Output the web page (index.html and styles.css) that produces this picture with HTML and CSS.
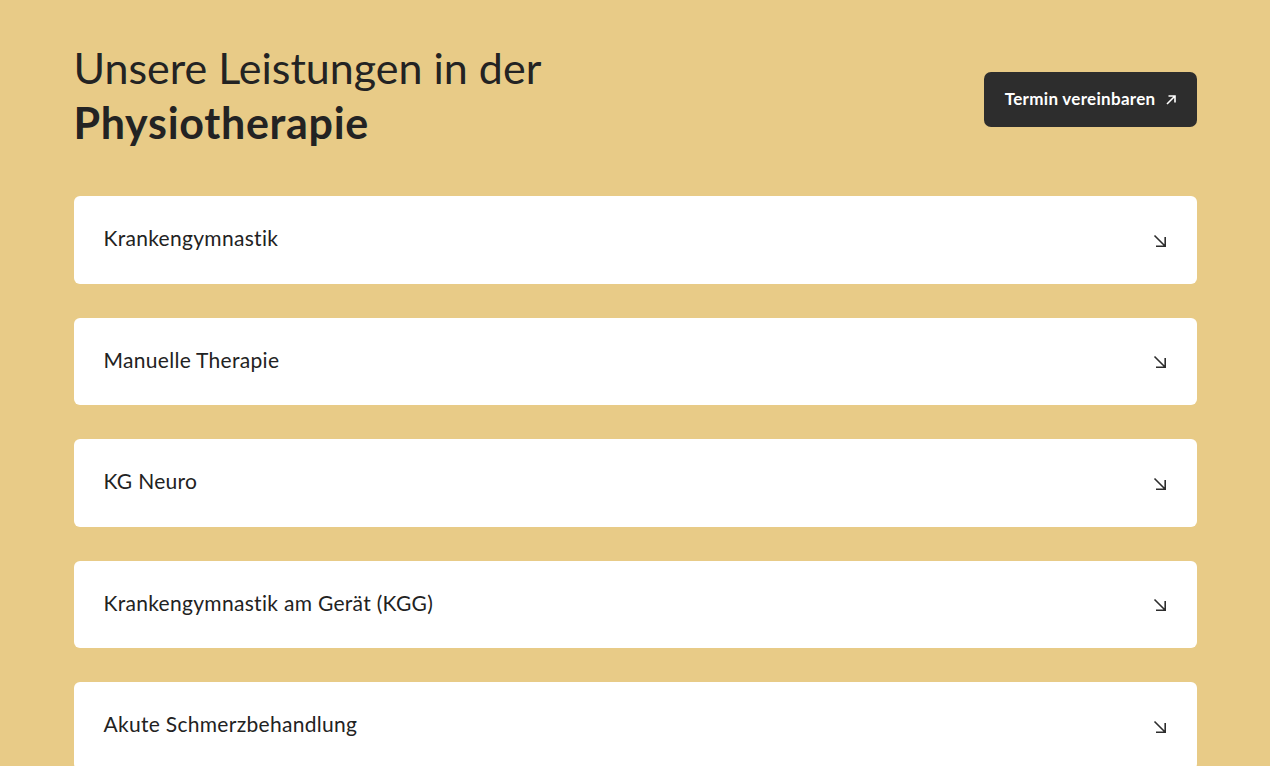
FILE: index.html
```html
<!DOCTYPE html>
<html lang="de">
<head>
    <meta charset="UTF-8">
    <meta name="viewport" content="width=device-width, initial-scale=1.0">
    <title>Physiotherapie Leistungen</title>
    <link rel="stylesheet" href="styles.css">
</head>
<body>
    <section class="services">
        <div class="services-head">
            <h2 class="services-title">Unsere Leistungen in der<br><strong>Physiotherapie</strong></h2>
            <a class="cta-btn" href="#">
                Termin vereinbaren
                <svg class="cta-icon" viewBox="0 0 12 12" width="12" height="12">
                    <path d="M2 10 L10 2 M3.5 2 H10 V8.5" fill="none" stroke="currentColor" stroke-width="1.6"/>
                </svg>
            </a>
        </div>

        <div class="service-list">
            <div class="service-item">
                <span class="service-name">Krankengymnastik</span>
                <svg class="service-icon" viewBox="0 0 14 14" width="14" height="14">
                    <path d="M1.5 1.5 L12 12 M3 12.2 H12.2 V3" fill="none" stroke="currentColor" stroke-width="1.6"/>
                </svg>
            </div>
            <div class="service-item">
                <span class="service-name">Manuelle Therapie</span>
                <svg class="service-icon" viewBox="0 0 14 14" width="14" height="14">
                    <path d="M1.5 1.5 L12 12 M3 12.2 H12.2 V3" fill="none" stroke="currentColor" stroke-width="1.6"/>
                </svg>
            </div>
            <div class="service-item">
                <span class="service-name">KG Neuro</span>
                <svg class="service-icon" viewBox="0 0 14 14" width="14" height="14">
                    <path d="M1.5 1.5 L12 12 M3 12.2 H12.2 V3" fill="none" stroke="currentColor" stroke-width="1.6"/>
                </svg>
            </div>
            <div class="service-item">
                <span class="service-name">Krankengymnastik am Gerät (KGG)</span>
                <svg class="service-icon" viewBox="0 0 14 14" width="14" height="14">
                    <path d="M1.5 1.5 L12 12 M3 12.2 H12.2 V3" fill="none" stroke="currentColor" stroke-width="1.6"/>
                </svg>
            </div>
            <div class="service-item">
                <span class="service-name">Akute Schmerzbehandlung</span>
                <svg class="service-icon" viewBox="0 0 14 14" width="14" height="14">
                    <path d="M1.5 1.5 L12 12 M3 12.2 H12.2 V3" fill="none" stroke="currentColor" stroke-width="1.6"/>
                </svg>
            </div>
        </div>
    </section>
</body>
</html>
```

FILE: styles.css
```css
* {
    margin: 0;
    padding: 0;
    box-sizing: border-box;
}

body {
    font-family: 'Lato', 'Noto Sans', sans-serif;
    background: #e8cb87;
    color: #222;
    min-height: 100vh;
}

.services {
    max-width: 1123px;
    margin: 0 auto;
    padding: 40px 0 40px;
}

.services-head {
    display: flex;
    justify-content: space-between;
    align-items: flex-start;
    margin-bottom: 46px;
}

.services-title {
    font-size: 43px;
    font-weight: 400;
    line-height: 55px;
    color: #232323;
}

.services-title strong {
    font-weight: 700;
    letter-spacing: 0.7px;
}

.cta-btn {
    display: flex;
    align-items: center;
    gap: 9px;
    margin-top: 32px;
    height: 55px;
    padding: 0 20px 3px 21px;
    background: #2d2d2d;
    color: #fff;
    border-radius: 7px;
    font-size: 17px;
    font-weight: 700;
    letter-spacing: 0.3px;
    text-decoration: none;
}

.cta-icon {
    margin-top: 3px;
}

.service-list {
    display: flex;
    flex-direction: column;
    gap: 34px;
}

.service-item {
    display: flex;
    justify-content: space-between;
    align-items: center;
    height: 87.5px;
    padding: 0 30px 4px;
    background: #fff;
    border-radius: 6px;
}

.service-name {
    font-size: 21px;
    letter-spacing: 0.3px;
    color: #222;
}

.service-icon {
    color: #2d2d2d;
    margin-top: 6px;
}
```
